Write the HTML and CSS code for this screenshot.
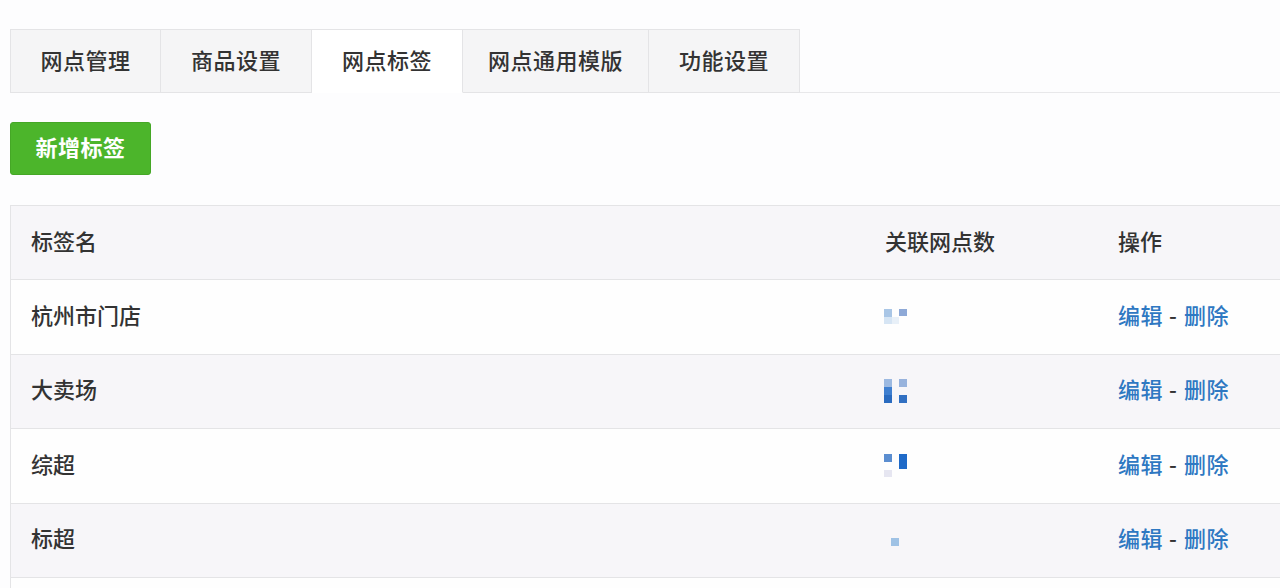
FILE: index.html
```html
<!DOCTYPE html>
<html lang="zh-CN">
<head>
<meta charset="utf-8">
<title>网点标签</title>
<link rel="stylesheet" href="styles.css">
</head>
<body>
<div class="page">
  <div class="tabs">
    <div class="tab">网点管理</div>
    <div class="tab">商品设置</div>
    <div class="tab active">网点标签</div>
    <div class="tab wide">网点通用模版</div>
    <div class="tab">功能设置</div>
    <div class="tab-rest"></div>
  </div>

  <div class="toolbar">
    <button class="btn-add">新增标签</button>
  </div>

  <div class="table">
    <div class="row head">
      <div class="cell c1">标签名</div>
      <div class="cell c2 text">关联网点数</div>
      <div class="cell c3">操作</div>
    </div>
    <div class="row">
      <div class="cell c1">杭州市门店</div>
      <div class="cell c2">
        <div class="mosaic m1">
          <span class="px a"></span><span class="px b"></span><span class="px c"></span><span class="px d"></span>
        </div>
      </div>
      <div class="cell c3"><a class="link">编辑</a><span class="sep">-</span><a class="link">删除</a></div>
    </div>
    <div class="row alt">
      <div class="cell c1">大卖场</div>
      <div class="cell c2">
        <div class="mosaic m2">
          <span class="px a"></span><span class="px b"></span><span class="px c"></span><span class="px d"></span><span class="px e"></span>
        </div>
      </div>
      <div class="cell c3"><a class="link">编辑</a><span class="sep">-</span><a class="link">删除</a></div>
    </div>
    <div class="row">
      <div class="cell c1">综超</div>
      <div class="cell c2">
        <div class="mosaic m3">
          <span class="px a"></span><span class="px b"></span><span class="px c"></span>
        </div>
      </div>
      <div class="cell c3"><a class="link">编辑</a><span class="sep">-</span><a class="link">删除</a></div>
    </div>
    <div class="row alt">
      <div class="cell c1">标超</div>
      <div class="cell c2">
        <div class="mosaic m4">
          <span class="px a"></span>
        </div>
      </div>
      <div class="cell c3"><a class="link">编辑</a><span class="sep">-</span><a class="link">删除</a></div>
    </div>
    <div class="row"></div>
  </div>
</div>
</body>
</html>
```

FILE: styles.css
```css
html, body {
  margin: 0;
  padding: 0;
  overflow: hidden;
  background: #fdfdfe;
}

body {
  font-family: "Noto Sans CJK SC", "Noto Sans", sans-serif;
  font-size: 22px;
  color: #333;
}

.page {
  padding: 29px 0 0 10px;
  width: 1300px;
}

/* Tabs */
.tabs {
  display: flex;
  height: 64px;
}

.tab {
  width: 151px;
  box-sizing: border-box;
  display: flex;
  align-items: center;
  justify-content: center;
  padding-bottom: 4px;
  background: #f5f5f6;
  border: 1px solid #e4e4e6;
  border-left: none;
  font-weight: 500;
  color: #333;
  letter-spacing: 0.5px;
}

.tab:first-child {
  border-left: 1px solid #e4e4e6;
}

.tab.wide {
  width: 186px;
}

.tab.active {
  background: #fff;
  border-bottom-color: transparent;
}

.tab-rest {
  flex: 1;
  border-bottom: 1px solid #e8e8ea;
}

/* Toolbar */
.toolbar {
  padding-top: 29px;
  height: 82px;
  box-sizing: border-box;
}

.btn-add {
  width: 141px;
  height: 53px;
  background: #4cb52b;
  border: 1px solid #45a726;
  border-radius: 3px;
  color: #fff;
  font-family: inherit;
  font-size: 22px;
  font-weight: 700;
  letter-spacing: 0.5px;
  padding: 0 0 5px;
}

/* Table */
.table {
  margin-top: 30px;
  border-top: 1px solid #e4e4e6;
  border-left: 1px solid #e4e4e6;
}

.row {
  display: flex;
  align-items: center;
  height: 73.5px;
  border-bottom: 1px solid #e4e4e6;
  background: #fefefe;
}

.row.head {
  height: 73px;
  background: #f7f6f9;
}

.row.alt {
  background: #f7f6f9;
}

.cell {
  box-sizing: border-box;
  padding-left: 20px;
  padding-bottom: 6px;
  font-weight: 500;
}

.c1 { width: 854px; }
.c2 { width: 233px; padding-bottom: 0; }
.c2.text { padding-bottom: 6px; }
.c3 { flex: 1; }

.link {
  color: #2e78c2;
  font-weight: 500;
  letter-spacing: 0.5px;
  cursor: pointer;
}

.sep {
  color: #333;
  margin: 0 7px 0 6px;
}

/* Pixelated (mosaic) counts */
.mosaic {
  position: relative;
  width: 24px;
  height: 24px;
  margin-left: -1px;
}

.px {
  position: absolute;
  display: block;
}

.m1 { margin-top: 8px; }
.m1 .a { left: 0; top: 0; width: 8px; height: 8px; background: #a9c6e6; }
.m1 .b { left: 0; top: 8px; width: 8px; height: 7px; background: #d6e5f4; }
.m1 .c { left: 8px; top: 8px; width: 7px; height: 7px; background: #e8f0f8; }
.m1 .d { left: 15px; top: 0; width: 8px; height: 7px; background: #8ea9d7; }

.m2 .a { left: 0; top: 0; width: 8px; height: 8px; background: #9cb9e1; }
.m2 .b { left: 0; top: 8px; width: 8px; height: 8px; background: #3f7fd0; }
.m2 .c { left: 0; top: 16px; width: 8px; height: 8px; background: #2a6bc0; }
.m2 .d { left: 15px; top: 0; width: 8px; height: 8px; background: #98b3dd; }
.m2 .e { left: 15px; top: 16px; width: 8px; height: 8px; background: #3170c2; }

.m3 .a { left: 0; top: 0; width: 8px; height: 8px; background: #5b8ed0; }
.m3 .b { left: 0; top: 16px; width: 8px; height: 7px; background: #e6e6f1; }
.m3 .c { left: 15px; top: 0; width: 8px; height: 15px; background: #1f6ac8; }

.m4 { height: 8px; margin-top: 4px; }
.m4 .a { left: 7px; top: 0; width: 8px; height: 8px; background: #9fc2e5; }
```
